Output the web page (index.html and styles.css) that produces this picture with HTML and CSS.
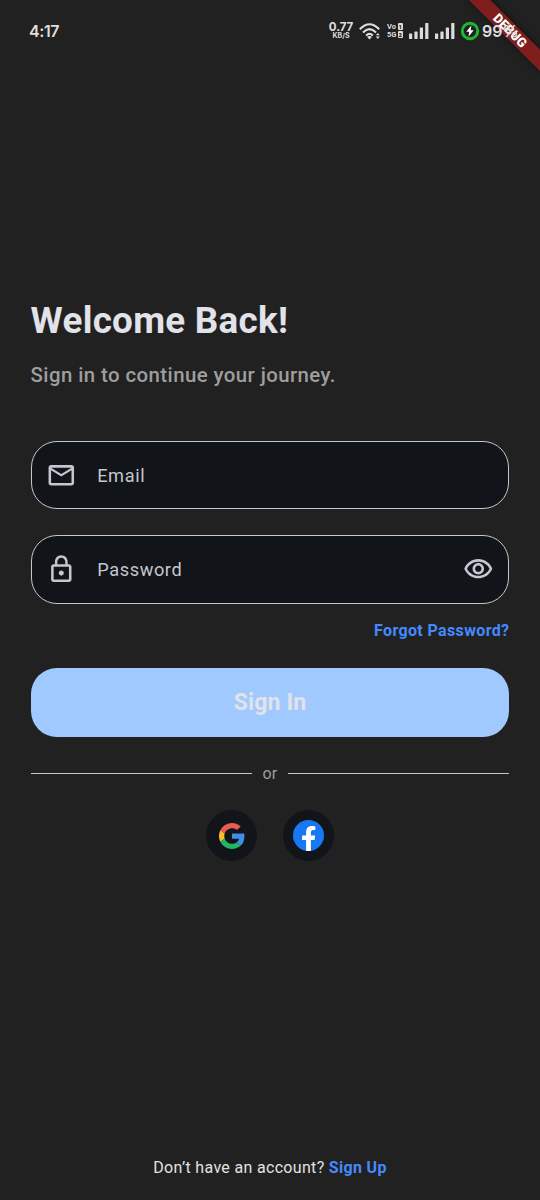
FILE: index.html
```html
<!DOCTYPE html>
<html lang="en">
<head>
<meta charset="utf-8">
<title>Sign In</title>
<link rel="stylesheet" href="styles.css">
</head>
<body>
<div class="screen">
  <header class="status-bar">
    <span class="clock">4:17</span>
    <div class="status-icons">
      <div class="net-speed"><span class="speed-value">0.77</span><span class="speed-unit">KB/S</span></div>
      <svg class="wifi" viewBox="0 0 22 17" width="22" height="17">
        <g fill="none" stroke="#dedede" stroke-width="2.100">
          <path d="M.8 6.200Q10.500-3.800 20.200 6.200"/>
          <path d="M4 9.400Q10.500 2.900 17 9.400"/>
          <path d="M7.100 12.500Q10.500 9.200 13.900 12.500"/>
        </g>
        <path d="M8 13.800Q10.500 12 13 13.800L10.500 16.400Z" fill="#dedede"/>
        <path d="M16.800 12.300L18.800 9.900L20.800 12.300ZM16.800 13.600H20.800L18.800 16Z" fill="#dedede"/>
      </svg>
      <div class="volte"><div class="volte-row"><span>Vo</span><b>1</b></div><div class="volte-row"><span>5G</span><b>2</b></div></div>
      <svg class="signal" viewBox="0 0 20 16" width="20" height="16" fill="#dcdcdc">
        <rect x="0" y="10.500" width="3.200" height="5.500" rx=".6"/><rect x="5.400" y="8.500" width="3.200" height="7.500" rx=".6"/><rect x="10.800" y="4.500" width="3.200" height="11.500" rx=".6"/><rect x="16.200" y="0" width="3.200" height="16" rx=".6"/>
      </svg>
      <svg class="signal" viewBox="0 0 20 16" width="20" height="16" fill="#dcdcdc">
        <rect x="0" y="10.500" width="3.200" height="5.500" rx=".6"/><rect x="5.400" y="8.500" width="3.200" height="7.500" rx=".6"/><rect x="10.800" y="4.500" width="3.200" height="11.500" rx=".6"/><rect x="16.200" y="0" width="3.200" height="16" rx=".6"/>
      </svg>
      <svg class="charging" viewBox="0 0 20 20" width="20" height="20">
        <circle cx="10" cy="10" r="7.700" fill="#202020" stroke="#1fb52f" stroke-width="3"/>
        <path d="M11.400 4.300L6.300 10.800H9.200L8.500 15.700L13.700 9.200H10.700Z" fill="#fff"/>
      </svg>
      <span class="battery">99%</span>
    </div>
  </header>

  <main class="content">
    <h1 class="title">Welcome Back!</h1>
    <p class="subtitle">Sign in to continue your journey.</p>

    <div class="field">
      <svg class="field-icon" viewBox="0 0 24 24"><path d="M22 6c0-1.100-.9-2-2-2H4c-1.100 0-2 .9-2 2v12c0 1.100.9 2 2 2h16c1.100 0 2-.9 2-2V6zm-2 0l-8 5-8-5h16zm0 12H4V8l8 5 8-5v10z"/></svg>
      <span class="label">Email</span>
    </div>
    <div class="field field-password">
      <svg class="field-icon" viewBox="0 0 24 24"><path d="M12 17c1.100 0 2-.9 2-2s-.9-2-2-2-2 .9-2 2 .9 2 2 2zm6-9h-1V6c0-2.760-2.240-5-5-5S7 3.240 7 6v2H6c-1.100 0-2 .9-2 2v10c0 1.100.9 2 2 2h12c1.100 0 2-.9 2-2V10c0-1.100-.9-2-2-2zM8.900 6c0-1.710 1.390-3.100 3.100-3.100s3.100 1.390 3.100 3.100v2H8.900V6zM18 20H6V10h12v10z"/></svg>
      <span class="label">Password</span>
      <svg class="field-icon eye" viewBox="0 0 24 24"><path d="M12 6c3.790 0 7.170 2.130 8.820 5.500C19.170 14.870 15.790 17 12 17s-7.170-2.130-8.820-5.500C4.830 8.130 8.210 6 12 6m0-2C7 4 2.730 7.110 1 11.500 2.730 15.890 7 19 12 19s9.270-3.110 11-7.500C21.270 7.110 17 4 12 4zm0 5c1.380 0 2.500 1.120 2.500 2.500S13.380 14 12 14s-2.500-1.120-2.500-2.500S10.620 9 12 9m0-2c-2.480 0-4.500 2.020-4.500 4.500S9.520 16 12 16s4.500-2.020 4.500-4.500S14.480 7 12 7z"/></svg>
    </div>
    <a class="forgot">Forgot Password?</a>
    <button class="sign-in">Sign In</button>

    <div class="divider"><span>or</span></div>

    <div class="socials">
      <div class="social">
        <svg viewBox="0 0 48 48" width="26" height="26">
          <path fill="#ea5a50" d="M24 9.500c3.540 0 6.710 1.220 9.210 3.600l6.850-6.850C35.900 2.380 30.470 0 24 0 14.620 0 6.510 5.380 2.560 13.220l7.980 6.190C12.430 13.720 17.740 9.500 24 9.500z"/>
          <path fill="#3f8fe8" d="M46.980 24.550c0-1.570-.15-3.890-.38-5.350H24v9.820h12.940c-.58 2.960-2.260 5.480-4.780 7.180l7.730 6c4.510-4.180 7.090-10.360 7.090-17.650z"/>
          <path fill="#fbbc2e" d="M10.530 28.590c-.48-1.450-.76-2.990-.76-4.590s.27-3.140.76-4.590l-7.980-6.190C.92 16.460 0 20.120 0 24c0 3.880.92 7.540 2.560 10.780l7.970-6.190z"/>
          <path fill="#22b565" d="M24 48c6.480 0 11.930-2.130 15.890-5.810l-7.730-6c-2.150 1.450-4.920 2.300-8.160 2.300-6.260 0-11.570-4.220-13.470-9.910l-7.980 6.190C6.510 42.620 14.620 48 24 48z"/>
        </svg>
      </div>
      <div class="social">
        <svg viewBox="0 0 31 31" width="31" height="31">
          <circle cx="15.500" cy="15.500" r="15.500" fill="#1877f2"/>
          <path fill="#fff" d="M13.100 31V20H9.100V15.500H13.100V12C13.100 8.100 15.400 6 19 6L22.300 6.300V10.100H20.300C18.500 10.100 17.900 11.200 17.900 12.400V15.500H22.200L21.500 20H17.900V31Q15.500 31.300 13.100 31Z"/>
        </svg>
      </div>
    </div>
  </main>

  <footer class="footer">Don’t have an account? <a class="sign-up">Sign Up</a></footer>
  <div class="banner">DEBUG</div>
</div>
</body>
</html>
```
FILE: styles.css
```css
* { box-sizing: border-box; }
body { margin: 0; background: #212121; font-family: Roboto, sans-serif; }
.screen {
  position: relative;
  display: flex;
  flex-direction: column;
  width: 540px;
  height: 1200px;
  overflow: hidden;
  background: #212121;
}
.status-bar {
  position: relative;
  z-index: 2;
  display: flex;
  justify-content: space-between;
  align-items: center;
  height: 62px;
  padding: 0 23px 0 29px;
  color: #dedede;
  flex: none;
}
.clock { font: 600 16px/20px Inter, sans-serif; letter-spacing: -.4px; }
.status-icons { display: flex; align-items: center; }
.net-speed { display: flex; flex-direction: column; align-items: center; width: 24px; margin-right: 6px; }
.speed-value { height: 9px; font: 700 11.500px/9px Inter, sans-serif; }
.speed-unit { height: 8px; font: 700 7px/8px Inter, sans-serif; }
.wifi { margin-right: 6px; }
.volte { display: flex; flex-direction: column; width: 16px; margin-right: 6px; }
.volte-row { display: flex; justify-content: space-between; height: 8px; font: 700 7.500px/8px Roboto, sans-serif; }
.volte-row b { height: 7px; padding: 0 1px; border-radius: 1px; background: #dedede; color: #212121; font-size: 6px; line-height: 7px; }
.signal { margin-right: 5.500px; }
.charging { margin-right: 2px; }
.battery { width: 35px; font: 600 16px/20px Inter, sans-serif; }

.content { display: flex; flex-direction: column; padding: 236px 30.600px 0; }
.title { margin: 0; color: #e2e2e9; font-size: 36.800px; line-height: 46px; font-weight: 700; letter-spacing: .27px; white-space: nowrap; }
.subtitle { margin: 17px 0 0; color: #9e9e9e; font-size: 20.400px; line-height: 28px; font-weight: 500; letter-spacing: .42px; }
.field {
  display: flex;
  align-items: center;
  height: 68px;
  margin-top: 52px;
  padding: 0 15px 0 14px;
  border: 1.300px solid #c4c6d0;
  border-radius: 26px;
  background: #111418;
}
.field-password { height: 69px; margin-top: 26px; }
.field-icon { width: 30.600px; height: 30.600px; fill: #c4c6d0; flex: none; }
.label { margin-left: 21px; color: #c4c6d0; font-size: 18.200px; letter-spacing: .6px; }
.eye { margin-left: auto; }
.forgot { align-self: flex-end; margin-top: 17px; color: #448aff; font-size: 16px; line-height: 20px; font-weight: 700; letter-spacing: .36px; }
.sign-in {
  height: 69px;
  margin-top: 27px;
  padding: 0;
  border: 0;
  border-radius: 26px;
  background: #a0c9ff;
  color: #e2e2e9;
  font: 700 23px/30px Roboto, sans-serif;
  letter-spacing: .15px;
}
.divider { display: flex; align-items: center; gap: 10px; height: 21px; margin-top: 26px; color: #9e9e9e; font-size: 16px; letter-spacing: .3px; }
.divider::before, .divider::after { content: ""; flex: 1; height: 1px; background: #c4c6d0; }
.socials { display: flex; justify-content: center; gap: 26px; margin-top: 26px; }
.social { display: grid; place-items: center; width: 51px; height: 51px; border-radius: 50%; background: #111418; }
.footer { margin-top: auto; padding-bottom: 22px; text-align: center; color: #e2e2e2; font-size: 16px; line-height: 20px; letter-spacing: .32px; }
.sign-up { color: #448aff; font-weight: 700; }
/* Corner ribbon crosses the end of the status bar */
.banner {
  position: absolute;
  left: 458.500px;
  top: 23px;
  width: 102px;
  height: 15.300px;
  transform: rotate(45deg);
  background: rgba(183, 28, 28, .63);
  box-shadow: 0 0 7px rgba(0, 0, 0, .5);
  color: #fff;
  font-size: 13px;
  line-height: 15.300px;
  font-weight: 900;
  text-align: center;
}
```
